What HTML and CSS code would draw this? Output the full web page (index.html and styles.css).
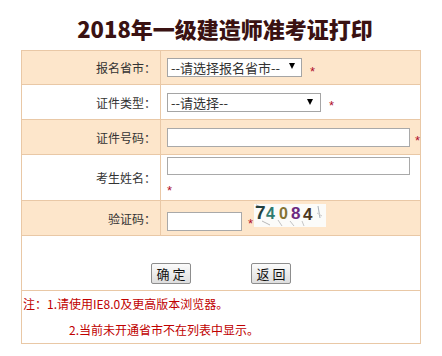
FILE: index.html
```html
<!DOCTYPE html>
<html lang="zh-CN">
<head>
    <meta charset="UTF-8">
    <title>2018年一级建造师准考证打印</title>
    <link rel="stylesheet" href="styles.css">
</head>
<body>
    <h1 class="page-title">2018年一级建造师准考证打印</h1>

    <table class="form-table">
        <tr class="row-odd row-province">
            <td class="label">报名省市：</td>
            <td class="field">
                <div class="field-line">
                    <select class="sel sel-province"><option>--请选择报名省市--</option></select>
                    <span class="req">*</span>
                </div>
            </td>
        </tr>
        <tr class="row-even row-idtype">
            <td class="label">证件类型：</td>
            <td class="field">
                <div class="field-line">
                    <select class="sel sel-idtype"><option>--请选择--</option></select>
                    <span class="req">*</span>
                </div>
            </td>
        </tr>
        <tr class="row-odd row-idno">
            <td class="label">证件号码：</td>
            <td class="field">
                <div class="field-line">
                    <input type="text" class="txt txt-long">
                    <span class="req req-tight">*</span>
                </div>
            </td>
        </tr>
        <tr class="row-even row-name">
            <td class="label">考生姓名：</td>
            <td class="field">
                <input type="text" class="txt txt-long txt-name">
                <div class="req-line"><span class="req req-solo">*</span></div>
            </td>
        </tr>
        <tr class="row-odd row-code">
            <td class="label">验证码：</td>
            <td class="field">
                <div class="code-line">
                    <input type="text" class="txt txt-code">
                    <span class="req req-code">*</span>
                    <!-- captcha image, drawn as svg -->
                    <svg class="captcha" width="72" height="28" viewBox="0 0 72 28">
                        <rect y="5" width="72" height="23" fill="#fbfbf9"/>
                        <line x1="2" y1="6" x2="10" y2="9" stroke="#9aa3a8" stroke-width="1"/>
                        <line x1="8" y1="22" x2="16" y2="26" stroke="#b8b8b8" stroke-width="1"/>
                        <line x1="24" y1="21" x2="28" y2="27" stroke="#c2c2c2" stroke-width="1"/>
                        <line x1="36" y1="22" x2="40" y2="27" stroke="#c2c2c2" stroke-width="1"/>
                        <line x1="48" y1="22" x2="50" y2="27" stroke="#c6c6c6" stroke-width="1"/>
                        <line x1="64" y1="7" x2="66" y2="19" stroke="#a9b0b8" stroke-width="1"/>
                        <line x1="63" y1="14" x2="68" y2="17" stroke="#c9c9c9" stroke-width="1"/>
                        <text x="1" y="20" class="cc" font-size="19" fill="#22403d">7</text>
                        <text x="12" y="20" class="cc" font-size="16" fill="#2f7a70">4</text>
                        <text x="25" y="20" class="cc" font-size="16" fill="#857433">0</text>
                        <text x="37" y="20" class="cc" font-size="17" fill="#6b2a80">8</text>
                        <text x="49" y="21" class="cc" font-size="17" fill="#4a3520">4</text>
                    </svg>
                </div>
            </td>
        </tr>
        <tr class="row-even row-buttons">
            <td colspan="2" class="btn-cell">
                <div class="btn-bar">
                    <button class="btn">确 定</button>
                    <button class="btn">返 回</button>
                </div>
            </td>
        </tr>
        <tr class="row-even row-notes">
            <td colspan="2" class="notes">
                <div>注：1.请使用IE8.0及更高版本浏览器。</div>
                <div class="note-indent">2.当前未开通省市不在列表中显示。</div>
            </td>
        </tr>
    </table>
</body>
</html>
```

FILE: styles.css
```css
* {
    margin: 0;
    padding: 0;
    box-sizing: border-box;
}

body {
    font-family: "Noto Sans CJK SC", "Liberation Sans", sans-serif;
    font-size: 12px;
    color: #333;
    background: #fff;
}

.page-title {
    height: 50px;
    line-height: 56px;
    padding-left: 8px;
    text-align: center;
    font-size: 22px;
    font-weight: 900;
    color: #3a1212;
}

.form-table {
    width: 400px;
    margin: 0 auto;
    border-collapse: collapse;
}

.form-table td {
    border: 1px solid #e9c8a6;
    vertical-align: middle;
}

.row-odd { background: #fde6cb; }
.row-even { background: #fff; }

.row-province { height: 34px; }
.row-idtype { height: 35px; }
.row-idno { height: 35px; }
.row-name { height: 46px; }
.row-code { height: 35px; }
.row-buttons { height: 55px; }
.row-notes { height: 53px; }

.label {
    width: 143px;
    text-align: right;
    padding-right: 4px;
    white-space: nowrap;
}

.field {
    padding-left: 6px;
}

.field-line {
    display: flex;
    align-items: center;
    white-space: nowrap;
}

.sel {
    appearance: none;
    -webkit-appearance: none;
    height: 19px;
    border: 1px solid #a5a5a5;
    font-family: "Noto Sans CJK SC", "Liberation Sans", sans-serif;
    font-size: 13px;
    line-height: 17px;
    color: #333;
    padding: 0 0 0 3px;
    background: #fff url("data:image/svg+xml,%3Csvg xmlns='http://www.w3.org/2000/svg' width='6' height='6'%3E%3Cpath d='M0 0h6L3 6z' fill='%23000'/%3E%3C/svg%3E") no-repeat;
}

.sel-province {
    width: 135px;
    background-position: right 6px top 4px;
}

.sel-idtype {
    width: 154px;
    background-position: right 7px top 5px;
}

.txt {
    display: block;
    height: 19px;
    border: 1px solid #a9a9a9;
    background: #fff;
}

.txt-long { width: 243px; }
.txt-name { height: 18px; }
.txt-code { width: 75px; }

.req {
    color: #b0102a;
    font-family: "Liberation Sans", sans-serif;
    font-size: 13px;
    line-height: 10px;
    height: 10px;
    margin-left: 8px;
    padding-top: 4px;
}

.req-tight {
    margin-left: 5px;
}

.req-line {
    height: 24px;
    display: flex;
    align-items: center;
}

.req-solo {
    margin-left: 0;
}

.code-line {
    display: flex;
    align-items: flex-start;
    margin-top: -7px;
}

.txt-code {
    margin-top: 13px;
}

.req-code {
    margin-left: 6px;
    margin-top: 20px;
    padding-top: 0;
}

.captcha {
    display: block;
    margin-left: 1px;
}

.cc {
    font-family: "Liberation Sans", sans-serif;
    font-weight: bold;
}

.btn-cell {
    vertical-align: bottom !important;
    padding-bottom: 6px;
}

.btn-bar {
    display: flex;
    justify-content: center;
    gap: 60px;
}

.btn {
    width: 40px;
    height: 21px;
    border: 1px solid #8d8d8d;
    border-radius: 2px;
    background: linear-gradient(#fbfbfb, #dedede);
    font-family: "Noto Sans CJK SC", sans-serif;
    font-size: 13px;
    line-height: 19px;
    color: #111;
}

.notes {
    color: #c00000;
    line-height: 26px;
    padding-left: 1px;
    vertical-align: top !important;
}

.note-indent {
    padding-left: 46px;
}
```
